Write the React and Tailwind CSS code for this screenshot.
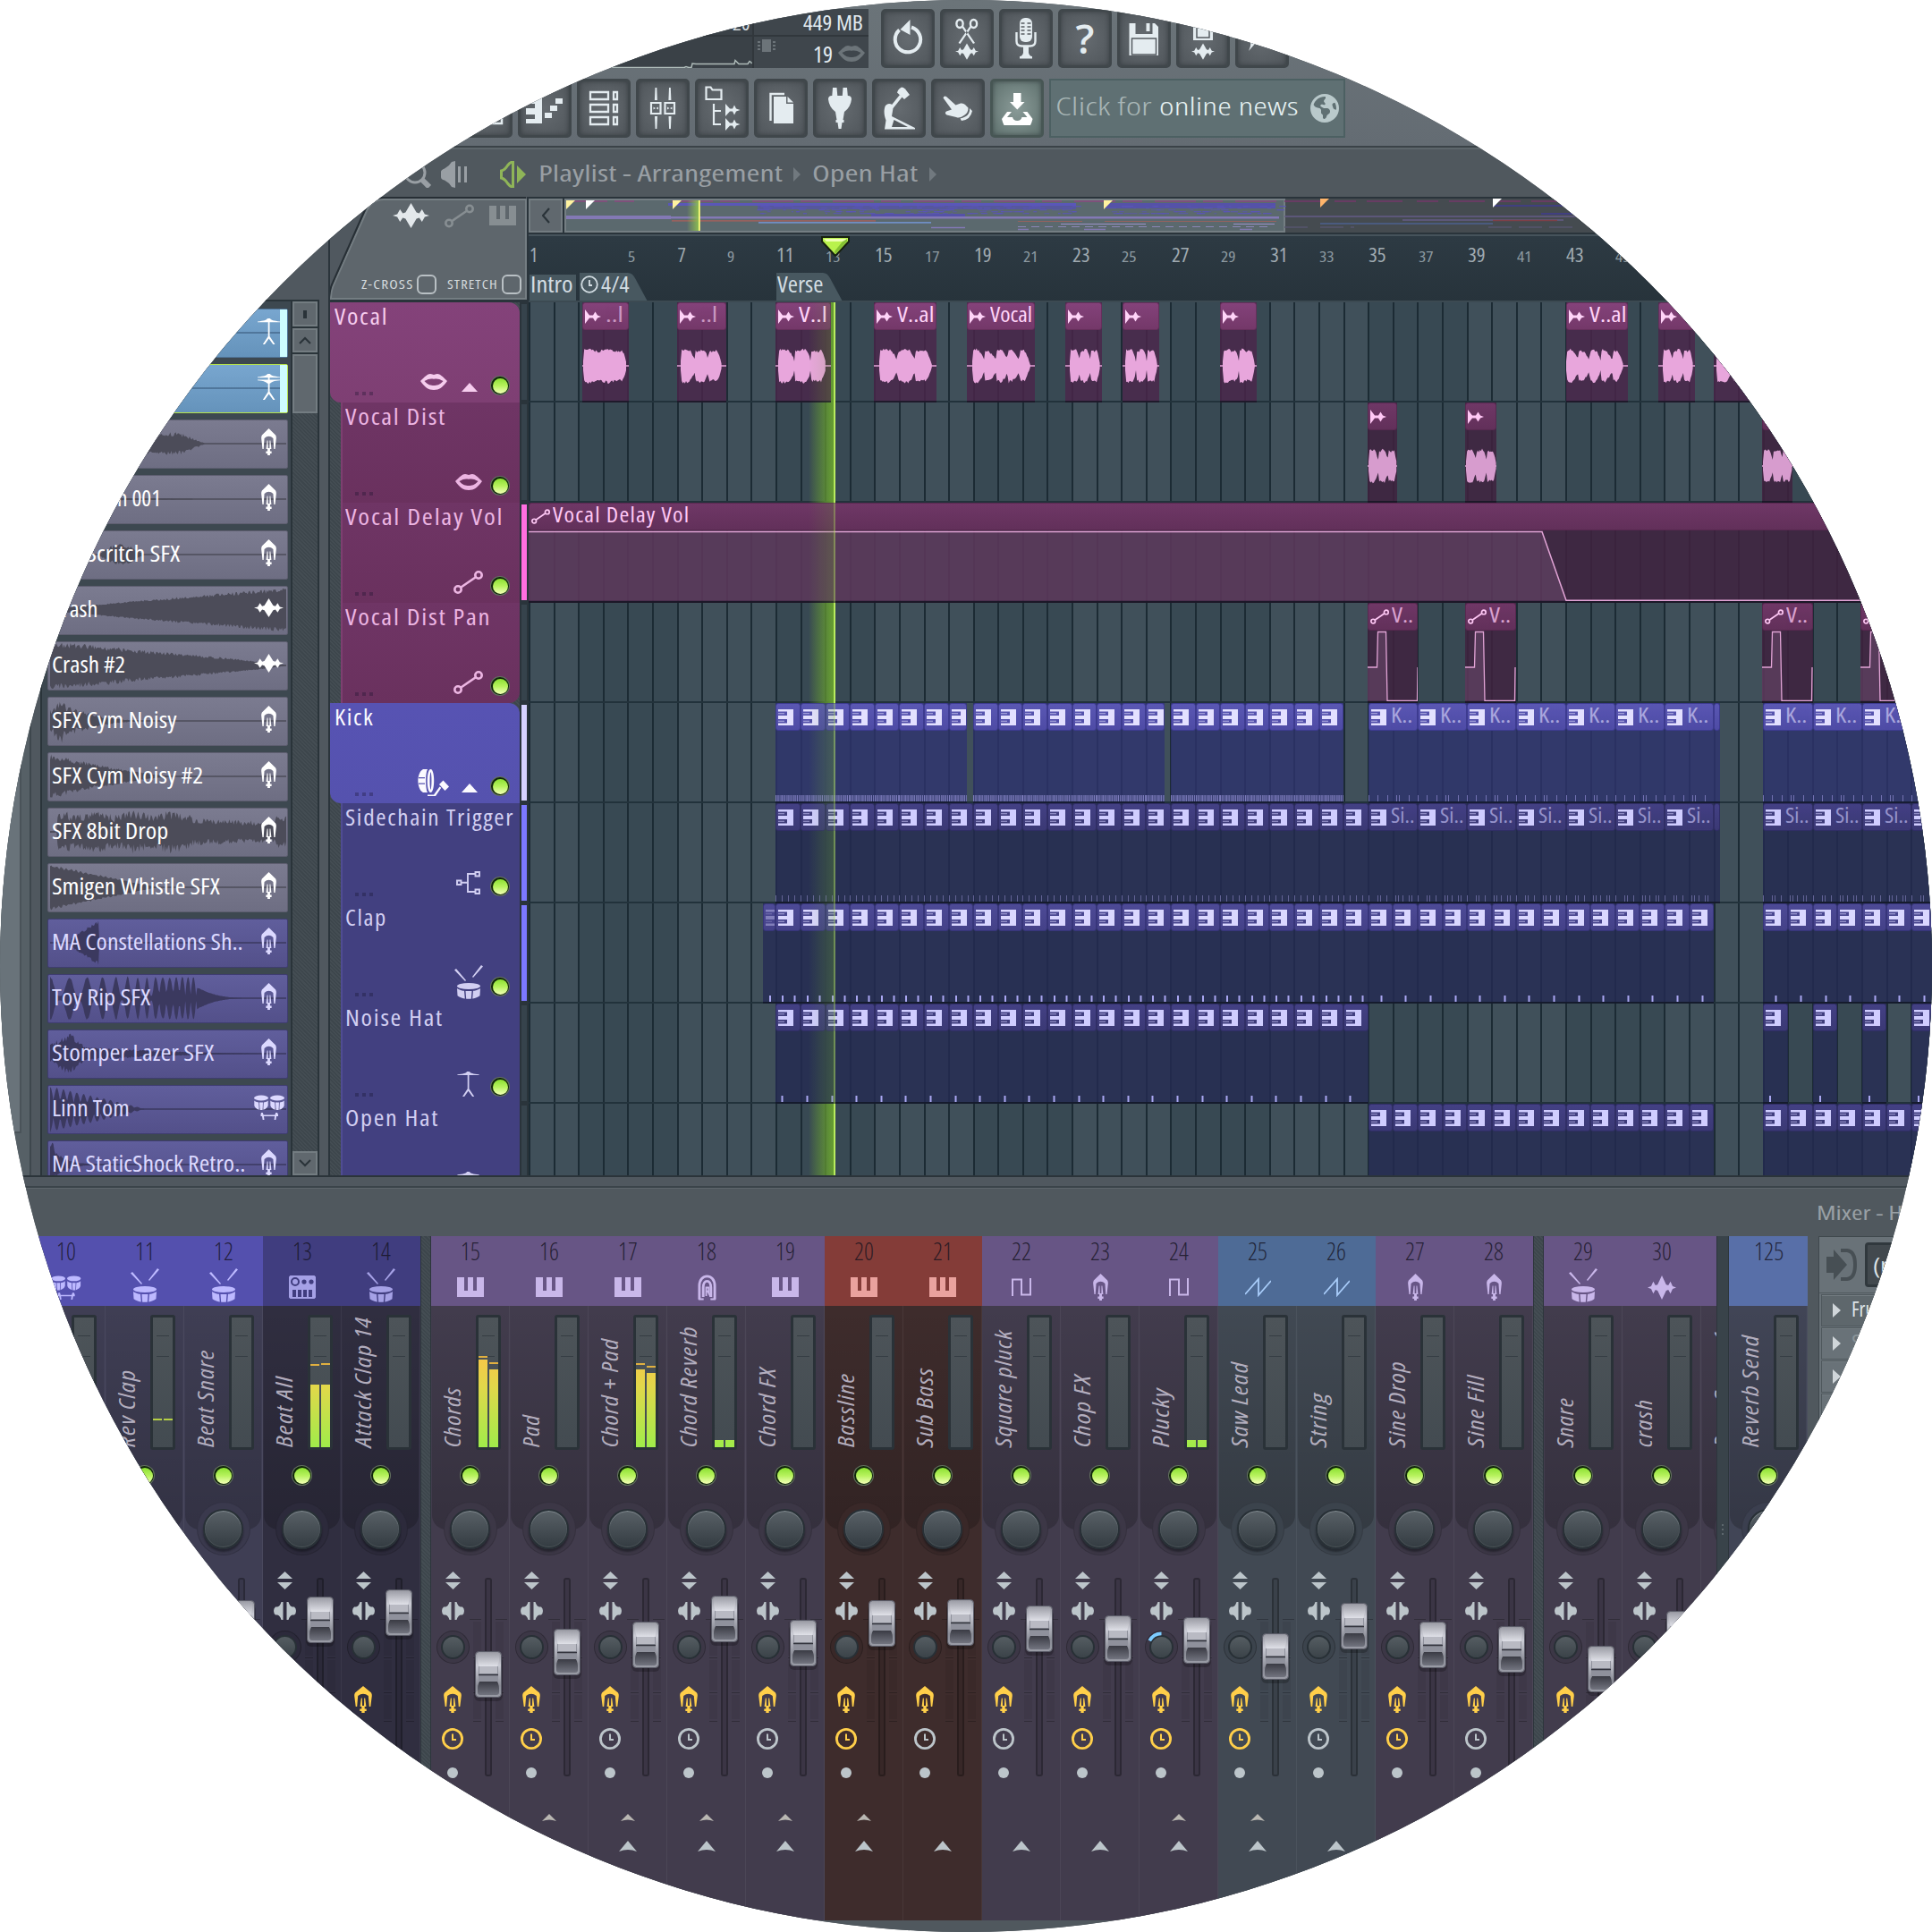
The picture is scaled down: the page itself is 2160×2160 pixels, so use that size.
import React, { useLayoutEffect, useRef, useState } from "react";
import { FaEarthAmericas } from "react-icons/fa6";

const FONT = "font-['Open_Sans','Noto_Sans',sans-serif]";

/* Text squeezed horizontally so that it occupies exactly `w` pixels. */
function T({ children, w, className = "" }) {
  const ref = useRef(null);
  const [k, setK] = useState(1);
  useLayoutEffect(() => {
    if (w && ref.current) setK(w / ref.current.offsetWidth);
  }, [w]);
  return (
    <span className={`inline-block shrink-0 whitespace-nowrap leading-none ${className}`} style={{ width: w }}>
      <span ref={ref} className="inline-block origin-left whitespace-nowrap [font-stretch:75%]" style={{ transform: `scaleX(${k})` }}>
        {children}
      </span>
    </span>
  );
}

/* ---------- waveform helpers ---------- */
function rng(seed) {
  let s = seed * 9301 + 49297;
  return () => {
    s = (s * 9301 + 49297) % 233280;
    return s / 233280;
  };
}
function wavePath(w, h, env, seed, rough = 0.25, step = 1.2) {
  const r = rng(seed);
  const mid = h / 2;
  const top = [];
  const bot = [];
  for (let x = 0; x <= w; x += step) {
    const e = env(x / w) * mid;
    top.push(`${x.toFixed(1)} ${(mid - e * (1 - rough * r())).toFixed(1)}`);
    bot.unshift(`${x.toFixed(1)} ${(mid + e * (1 - rough * r())).toFixed(1)}`);
  }
  return `M${top.join("L")}L${bot.join("L")}z`;
}
const burst = (k, tail = 0.1) => (t) => {
  const u = (t * k) % 1;
  const rise = Math.min(1, 0.3 + (u / k) * 34);
  const fall = Math.min(1, 0.3 + Math.sqrt((1 - u) / k) * 2.1);
  const end = t > 1 - tail ? Math.max(0, (1 - t) / tail) : 1;
  return Math.min(rise, fall) * Math.sqrt(end) * (0.94 + 0.06 * Math.sin(t * 14));
};

/* ---------- icons ---------- */
const WaveIcon = ({ className }) => (
  <svg viewBox="0 0 40 28" className={className} fill="currentColor" preserveAspectRatio="none">
    <path d="M0 14l5-1.5 3-5.5 3 4.5 3-1 6-10.5 6 10.5 3 1 3-4.5 3 5.5 5 1.5-5 1.5-3 5.5-3-4.5-3 1-6 10.5-6-10.5-3-1-3 4.5-3-5.5z" />
  </svg>
);
const HalfWave = ({ className }) => (
  <svg viewBox="0 0 18 16" className={className} fill="currentColor">
    <path d="M0 0l5 6.5 4 0 2.500-4 2.500 4 4 1.500-4 1.500-2.500 4-2.500-4-4 0L0 16z" />
  </svg>
);
const Lips = ({ className }) => (
  <svg viewBox="0 0 30 18" className={className} fill="currentColor" fillRule="evenodd">
    <path d="M0 8C5 3 8 0 11 0c2 0 3 1 4 1s2-1 4-1c3 0 6 3 11 8-5 7-9 10-15 10S5 15 0 8zM4.500 8c4 4.500 7 5 10.500 5s6.500-.5 10.500-5C21 5.500 18.500 5 15 5.800 11.500 5 9 5.500 4.500 8z" />
  </svg>
);
const Nodes = ({ className }) => (
  <svg viewBox="0 0 33 26" className={className} fill="none" stroke="currentColor" strokeWidth="2.600">
    <circle cx="5" cy="21" r="3.700" />
    <circle cx="28" cy="5" r="3.700" />
    <path d="M8.500 18.500L24.500 7.500" />
  </svg>
);
const Plug = ({ className }) => (
  <svg viewBox="0 0 20 30" className={className} fill="currentColor" preserveAspectRatio="none">
    <path d="M10 0l9 7.500q1 1.500.8 3.500L18.300 23h-1.500L15.800 11Q13 8.700 10 8.700T4.200 11l-1 12H1.700L.2 11Q0 9 1 7.500z" />
    <path d="M7.800 13.500L6.600 23h6.800l-1.200-9.500h-1L11 22H9l-.2-8.500z" />
    <path d="M8.300 22h3.400v8H8.300z" />
    <path d="M6.300 25.500h7.400V28H6.300z" />
  </svg>
);
const Piano = ({ className }) => (
  <svg viewBox="0 0 30 22" className={className} fill="currentColor">
    <path d="M0 0h8v15h4V0h6v15h4V0h8v22H0z" />
  </svg>
);
const Pattern = ({ className }) => (
  <svg viewBox="0 0 17 18" className={className} fill="currentColor">
    <path d="M0 0h17v18H0v-2.500h10V11H0V7h10V2.500H0z" />
    <path d="M0 4.200h7v1H0zM0 12.700h7v1H0z" opacity=".7" />
  </svg>
);
const Drum = ({ className }) => (
  <svg viewBox="0 0 32 38" className={className} fill="currentColor">
    <path d="M0 5.500L2 4l11 13-1 1zM30 0l2 1.500L21 14l-1-1z" />
    <ellipse cx="16" cy="23.500" rx="13" ry="3.500" />
    <path d="M3 26c3 2 7 2.800 8 2.800L11.800 37.500C7 36.800 4 35 3.500 34zM12.500 29h7l-.7 8.800h-5.600zM29 26c-3 2-7 2.800-8 2.800L20.200 37.500c4.800-.7 7.800-2.500 8.300-3.500z" />
  </svg>
);
const Hat = ({ className, twin }) => (
  <svg viewBox="0 0 25 30" className={className} fill="currentColor">
    <path d="M0 4.500C7 3.500 10 3 11 1h3c1 2 4 2.500 11 3.500v.8H0z" />
    {twin && <path d="M0 7.500h25v.8c-7 .5-9 1.500-11 3.500h-3C9 9.800 7 8.800 0 8.300z" />}
    <path d="M11.700 5h1.800v16l6 9h-2.200l-4.700-6.500L8 30H5.800l5.900-9z" />
  </svg>
);
const Toms = ({ className }) => (
  <svg viewBox="0 0 34 28" className={className} fill="currentColor">
    <ellipse cx="8" cy="3.500" rx="8" ry="3" />
    <ellipse cx="26" cy="3.500" rx="8" ry="3" />
    <path d="M.3 6.500C2 8 4 8.300 5.200 8.500l.5 8.300C2.500 16 .8 14 .3 12zM6 8.500h4l-.4 8.600H6.600zM15.700 6.500c-1.700 1.500-3.700 1.800-4.900 2l-.5 8.300c3.200-.8 4.900-2.800 5.400-4.800z" />
    <path d="M18.300 6.500c1.700 1.500 3.700 1.800 4.900 2l.5 8.300c-3.200-.8-4.900-2.800-5.400-4.800zM24 8.500h4l-.4 8.600h-3zM33.700 6.500c-1.700 1.500-3.700 1.800-4.900 2l-.5 8.300c3.200-.8 4.900-2.800 5.400-4.800z" />
    <path d="M8 20h1.800l.8 2.500h12.800l.8-2.500H26l1 2v2h-2l-.6 4h-1.800l.5-4H11l.5 4H9.700L9 24H7.500v-2z" />
  </svg>
);
const Kick = ({ className }) => (
  <svg viewBox="0 0 35 30" className={className} fill="currentColor">
    <path d="M6 0h5C8.500 4 8.500 22 11 26H6C-1.500 22-1.500 4 6 0z" />
    <path d="M1 9h7v1.200H1zM1 15.500h7v1.200H1z" fill="#5552b0" />
    <path fillRule="evenodd" d="M14.500 0c5 0 5 26 0 26s-5-26 0-26zm0 3c-1.300 3-1.300 17 0 20 1.300-3 1.300-17 0-20z" />
    <path d="M11 28.500h7l6.500-9 1.800 1.200L20 30h-9z" />
    <path d="M24 17l4.500-4.500 6.500 7-4.500 4.500z" />
  </svg>
);
const Route = ({ className }) => (
  <svg viewBox="0 0 27 26" className={className} fill="none" stroke="currentColor" strokeWidth="1.900">
    <path d="M1 10.500h4.500v4.500H1zM21.500 1H26v4.500h-4.500zM21.500 20.500H26V25h-4.500zM5.500 12.700H13M21.500 3H13v20h8.500" />
  </svg>
);
const Machine = ({ className }) => (
  <svg viewBox="0 0 30 26" className={className} fill="currentColor" fillRule="evenodd">
    <path d="M1.500 0h27L30 1.500v23L28.500 26h-27L0 24.500v-23zM7 2a5 5 0 100 10A5 5 0 007 2zm0 2a3 3 0 110 6 3 3 0 010-6zm10 .5a2.600 2.600 0 100 5.200 2.600 2.600 0 000-5.200zm8 0a2.600 2.600 0 100 5.200 2.600 2.600 0 000-5.200zM4 16v8h4v-8zm6 0v8h4v-8zm6 0v8h4v-8zm6 0v8h4v-8z" />
  </svg>
);
const Arch = ({ className }) => (
  <svg viewBox="0 0 22 30" className={className} fill="none" stroke="currentColor" strokeWidth="3">
    <path d="M2 29V13C2-2 20-2 20 13v16M6.500 26V15C6.500 5 15.500 5 15.500 15v11" />
    <path d="M10 25V15h3v4.500h-3M12 19.500l3 6M1 28.700h6M15 28.700h6" strokeWidth="2" />
  </svg>
);
const Square = ({ className }) => (
  <svg viewBox="0 0 22 20" className={className} fill="none" stroke="currentColor" strokeWidth="2">
    <path d="M1 20V1.500h10V18.500h10V0" />
  </svg>
);
const Saw = ({ className }) => (
  <svg viewBox="0 0 29 22" className={className} fill="none" stroke="currentColor" strokeWidth="1.800">
    <path d="M0 19L15 2V20L29 4" />
  </svg>
);
const Clock = ({ className }) => (
  <svg viewBox="0 0 24 24" className={className} fill="none" stroke="currentColor">
    <circle cx="12" cy="12" r="10.600" strokeWidth="2.800" />
    <path d="M12 6.500V13h4" strokeWidth="2" />
  </svg>
);

const Led = ({ className = "" }) => (
  <span className={`flex shrink-0 rounded-full border-[1.500px] border-white/35 bg-[#10260a] p-[1.500px] ${className}`}>
    <span className="flex-1 rounded-full bg-linear-to-b from-[#8be02e] via-[#b8f35e] to-[#f2ffb4]" />
  </span>
);

/* ---------- top toolbar ---------- */
const wavelet = (cx, cy, s = 1) => (
  <path
    transform={`translate(${cx - 13 * s} ${cy - 9 * s}) scale(${0.65 * s})`}
    d="M0 14l5-1.500 3-5.500 3 4.500 3-1 6-10.500 6 10.500 3 1 3-4.500 3 5.500 5 1.500-5 1.500-3 5.500-3-4.500-3 1-6 10.500-6-10.500-3-1-3 4.500-3-5.500z"
  />
);
const halfwave = (x, y) => <path d={`M${x} ${y - 7}l5 5.500h3l2-4 2 4 4.500 1.500-4.500 1.500-2 4-2-4h-3l-5 5.500z`} />;
const tool = {
  undo: (
    <>
      <path d="M20.500 23.500A14.200 14.200 0 1034 20.500" fill="none" stroke="currentColor" strokeWidth="4" />
      <path d="M32.500 12v17L21.500 23z" />
    </>
  ),
  cut: (
    <>
      <g fill="none" stroke="currentColor" strokeWidth="2.400">
        <ellipse cx="22" cy="16.500" rx="3.600" ry="4.500" />
        <ellipse cx="37.500" cy="16.500" rx="3.600" ry="4.500" />
      </g>
      <path d="M24 20l2-1 13 19-2 1zM35.500 20l-2-1L20.500 38l2 1z" />
      {wavelet(30, 47.500)}
    </>
  ),
  mic: (
    <>
      <rect x="23" y="10" width="14" height="27" rx="6" />
      <path d="M24.500 16h4m3 0h4M24.500 20h4m3 0h4M24.500 24h4m3 0h4M24.500 28h4m3 0h4" stroke="#555b60" strokeWidth="1.500" />
      <path d="M19.500 26v10q0 5.500 6 5.500h9q6 0 6-5.500V26" fill="none" stroke="currentColor" strokeWidth="2.400" />
      <path d="M27 42h6v7q1 4 4 4v2.500H23V53q3 0 4-4z" />
    </>
  ),
  save: (
    <>
      <path d="M13.500 16h7v12h19V16H42l4 4v32H13.500z" />
      <path d="M32.500 16h4v9h-4z" />
      <path d="M16.500 33h27v18h-27z" fill="none" stroke="#555b60" strokeWidth="1.500" />
    </>
  ),
  saveWave: (
    <>
      <path d="M19 8h22v27H19z" />
      <path d="M23 20h14v12H23z" fill="none" stroke="#555b60" strokeWidth="1.500" />
      {wavelet(30, 47.500)}
    </>
  ),
  chat: <path d="M30 12c12 0 20 6 20 14s-8 14-20 14c-3 0-6 0-8-1l-7 8c3-7 3-10 0-13-3-3-5-5-5-8 0-8 8-14 20-14zM16 30q6 8 22 5V20H20z" fillRule="evenodd" />,
  list: <path d="M12 14h36v8H12zM12 28h36v8H12zM12 42h36v8H12z" fill="none" stroke="currentColor" strokeWidth="2.500" />,
  piano: (
    <>
      <path d="M9 16h18v34H9v-5h10v-5H9v-7h10v-5H9z" />
      <path d="M30 38h8v6h-8zM36 30h8v6h-8zM42 22h8v6h-8z" />
    </>
  ),
  rack: (
    <path
      d="M15 15h20v8H15zM41 15h4v8h-4zM15 29h20v8H15zM41 29h4v8h-4zM15 43h20v8H15zM41 43h4v8h-4z"
      fill="none"
      stroke="currentColor"
      strokeWidth="2.300"
    />
  ),
  mixer: (
    <>
      <path d="M17 27h10.500v12H17zM32.500 27H43v12H32.500z" fill="none" stroke="currentColor" strokeWidth="2.200" />
      <path d="M21.500 10h1.800l.6 14h-3zM37 10h1.800l.6 14h-3zM21 42h3l-.6 14h-1.800zM36.500 42h3l-.6 14h-1.800zM19.500 31.500l2.500 1.500-2.500 1.500zM25 31.500L22.500 33l2.500 1.500zM35 31.500l2.500 1.500-2.500 1.500zM40.500 31.500L38 33l2.500 1.500z" />
    </>
  ),
  tree: (
    <>
      <path d="M12.500 9.500h5l2 3h10v10.500h-17zM21 28v23h8M21 36h8" fill="none" stroke="currentColor" strokeWidth="2.200" />
      {halfwave(34, 35)}
      {halfwave(34, 51)}
    </>
  ),
  pages: (
    <>
      <path d="M18.500 47V17H34" fill="none" stroke="currentColor" strokeWidth="2.400" />
      <path d="M22 20h14v8h8v22H22z" />
      <path d="M37.500 20l6.500 6.500h-6.500z" />
    </>
  ),
  plug: <path d="M22 10h4.500l.8 9h-6zM33.500 10H38l.8 9h-6zM17 23q0-4 4-4h18q4 0 4 4-1 9-8 14l-1.500 9h1v3h-2l-1 7h-3l-1-7h-2v-3h1L25 37q-7-5-8-14z" />,
  hammer: (
    <>
      <path d="M33 9.500q2 0 4 2l5 6.500-6 5-8-7.500q1-4 5-6z" />
      <path d="M31 18l3 2-10.500 13-3-2z" />
      <path d="M19 28c3 0 5 2 4.500 5L22 42l26 13v1.500H14l1.500-10C13 40 13 34 15 30q2-2 4-2z" />
      <path d="M22 54l2.500-8L40 54z" fill="#555b60" />
    </>
  ),
  hand: (
    <>
      <path d="M13.500 21.500Q14.500 18.500 17 20L27.500 29.500 33 27.500Q36 27 38 29L41.500 32.500Q42 38 36 41.500 32 44.500 28 43L17.500 40.500Q14.500 38.500 17 36.500L23 34.500z" />
      <path d="M43 33Q44 42 32.500 44.500L34 47Q44 46 46 36z" />
    </>
  ),
  down: (
    <>
      <path d="M26 16h8.500v10h4l-8.200 8.500-8.300-8.500h4z" />
      <path d="M19 37h5l-5 6h6q1 4 5.300 4 4.200 0 5.200-4h6l-5-6h5l6 8q-1 4-2.500 7H15.500Q14 49 13 45z" />
    </>
  ),
};
const ToolButton = ({ icon, hot }) => (
  <div
    className={`flex h-[66px] w-[60px] shrink-0 items-center justify-center rounded-[5px] border-[3px] ${
      hot
        ? "border-[#475654] bg-radial from-[#8a9b98] to-[#5f716e] text-white"
        : "border-[#40474b] bg-radial from-[#656b70] to-[#50565b] text-[#e4ecf0]"
    } shadow-[inset_0_0_5px_rgba(30,36,40,.5)]`}
  >
    {icon === "help" ? (
      <span className="-mt-[2px] text-[46px] leading-none font-semibold">?</span>
    ) : (
      <svg viewBox="0 0 60 66" className="h-[66px] w-[60px] shrink-0" fill="currentColor">
        {tool[icon]}
      </svg>
    )}
  </div>
);

function Toolbar() {
  return (
    <header className="flex h-[163px] shrink-0 flex-col bg-linear-to-b from-[#6b7479] to-[#646c73] pt-[10px]">
      <div className="flex h-[66px] pl-[600px]">
        <div className="flex w-[241px] flex-col bg-[#3a4147]">
          <div className="flex h-[31px] items-center justify-end border-b-2 border-[#31373c] pr-[2px] text-[22px] text-[#d5dce0]">
            <T w={20}>20</T>
          </div>
          <svg viewBox="0 0 241 35" className="h-[35px] w-[241px]" fill="none" stroke="#aebbb9" strokeWidth="1.500">
            <path d="M60 34.500H165l2-1 3 1h3l1-4.500 4 .5h43l1-4 4 4h10l2-3 1.500 1 1 1.500" />
          </svg>
        </div>
        <div className="flex w-[130px] flex-col border-l-2 border-[#31373c] bg-[#3f464c] text-[#e2ebf0]">
          <div className="flex h-[31px] items-center justify-end border-b-2 border-[#31373c] pt-[2px] pr-[6px] text-[23px]">
            <T w={67}>449 MB</T>
          </div>
          <div className="flex h-[35px] justify-between pl-[4px]">
            <svg viewBox="0 0 20 14" className="mt-[3px] h-[14px] w-[20px]" fill="#6c7479">
              <path d="M5 0h10v14H5zM0 2h3v2H0zM0 6h3v2H0zM0 10h3v2H0zM17 2h3v2h-3zM17 6h3v2h-3zM17 10h3v2h-3z" />
            </svg>
            <div className="flex items-center gap-[6px] pr-[4px] pt-[3px] text-[26px]">
              <T w={22}>19</T>
              <Lips className="h-[18px] w-[30px] text-[#6c7479]" />
            </div>
          </div>
        </div>
        <div className="flex gap-[6px] pl-[14px]">
          {["undo", "cut", "mic", "help", "save", "saveWave", "chat"].map((i) => (
            <ToolButton key={i} icon={i} />
          ))}
        </div>
      </div>
      <div className="mt-[12px] flex h-[66px] gap-[6px] pl-[513px]">
        {["list", "piano", "rack", "mixer", "tree", "pages", "plug", "hammer", "hand"].map((i) => (
          <ToolButton key={i} icon={i} />
        ))}
        <ToolButton icon="down" hot />
        <div className="flex w-[331px] items-center gap-[9px] border-2 border-[#4c6062] bg-[#5f7073] pl-[5px] text-[28px] font-light">
          <T w={107} className="-mt-[6px] text-[#a9b7b7]">
            Click for
          </T>
          <T w={156} className="-mt-[6px] font-[350] text-[#e6f1f2]">
            online news
          </T>
          <FaEarthAmericas className="ml-[4px] size-[32px] text-[#b9c9cb]" />
        </div>
      </div>
    </header>
  );
}

/* ---------- playlist title ---------- */
const Chev = () => <span className="h-0 w-0 border-y-[8px] border-l-[8px] border-y-transparent border-l-[#71797f]" />;
function PlaylistTitle() {
  return (
    <div className="flex h-[57px] shrink-0 items-center border-t-2 border-[#3b4348] bg-[#50585e] pt-[4px] pl-[445px] text-[25px] text-[#999fa4] shadow-[inset_0_2px_0_#5d666b]">
      <svg viewBox="0 0 37 30" className="h-[30px] w-[37px]" fill="none" stroke="currentColor">
        <circle cx="19" cy="13" r="11" strokeWidth="3" />
        <path d="M27 21l8 8" strokeWidth="6" />
      </svg>
      <svg viewBox="0 0 30 30" className="ml-[11px] h-[30px] w-[30px]" fill="currentColor">
        <path d="M0 12q0-2 4-3.500Q9 6 12 1l4-1v30l-4-1q-3-5-8-7.500-4-1-4-3.500zM19 6h3v18h-3zM26 6h3v18h-3z" />
      </svg>
      <svg viewBox="0 0 30 30" className="ml-[36px] h-[30px] w-[30px] text-[#8fb558]" fill="currentColor">
        <path d="M1.500 11q4-1 7-6 3-4 6-4v28q-3 0-6-4-3-5-7-6z" fill="none" stroke="currentColor" strokeWidth="3" />
        <path d="M19 5l10 10-10 10z" />
      </svg>
      <T w={273} className="-mt-[3px] ml-[13px]">Playlist - Arrangement</T>
      <span className="w-[12px]" />
      <Chev />
      <T w={118} className="mx-[13px] -mt-[3px]">Open Hat</T>
      <Chev />
    </div>
  );
}

/* ---------- picker ---------- */
const decay = (p) => (t) => Math.pow(Math.max(0, 1 - t), p);
const pickerItems = [
  { kind: "blue", icon: "hat" },
  { kind: "blue", icon: "hat2", sel: true },
  { name: "", w: 10, env: (t) => (t < 0.65 ? 0.5 * Math.min(1, (0.66 - t) * 9) : 0) },
  { name: "Explosion 001", w: 122, env: (t) => (t < 0.6 ? 0.1 * (0.6 - t) + 0.02 : 0) },
  { name: "MA Scritch SFX", w: 143, env: (t) => (t < 0.2 ? 0 : t < 0.4 ? Math.sin((t - 0.2) * 15.7) * 0.45 : 0) },
  { name: "Crash", w: 52, icon: "wave", env: (t) => 0.05 + 1.0 * Math.pow(t, 1.0) * (1 - 0.1 * t), rough: 0.2 },
  { name: "Crash #2", w: 82, icon: "wave", env: (t) => Math.pow(1 - t, 0.8) * (t < 0.3 ? 1.05 : 1.0), rough: 0.25 },
  { name: "SFX Cym Noisy", w: 140, env: (t) => (t < 0.05 ? 0.5 + t * 10 : Math.max(0, 1.1 * Math.pow(Math.max(0, 1 - t * 2.2), 2.4))), rough: 0.5 },
  { name: "SFX Cym Noisy #2", w: 169, env: (t) => Math.pow(Math.max(0, 1 - t * 1.9), 1.3) * 0.98, rough: 0.3 },
  { name: "SFX 8bit Drop", w: 130, env: (t) => (t < 0.03 ? 0.03 : t < 0.6 ? 0.85 + 0.1 * Math.sin(t * 40) : t > 0.95 ? 0.7 : 0.5 + (0.85 - t) * 0.4), rough: 0.45 },
  { name: "Smigen Whistle SFX", w: 188, env: (t) => Math.max(0, 1 - t * 2.2) * (0.95 + 0.05 * Math.sin(t * 300)), rough: 0.08 },
  { kind: "pur", name: "MA Constellations Sh..", w: 214, env: (t) => (t > 0.09 && t < 0.207 ? 0.2 + (t - 0.09) * 7 : 0), rough: 0.2 },
  {
    kind: "pur",
    name: "Toy Rip SFX",
    w: 110,
    env: (t) => (t < 0.62 ? 0.95 * (0.1 + 0.9 * Math.pow(Math.abs(Math.cos(3.1416 * (t * 12 + t * t * t * 30))), t < 0.45 ? 3 : 0.9)) : 0.5 * Math.pow(Math.max(0, 1 - (t - 0.62) * 4), 3)),
    rough: 0.08,
  },
  { kind: "pur", name: "Stomper Lazer SFX", w: 181, env: (t) => (t < 0.08 ? 0.4 + t * 7 : t < 0.14 ? 0.96 - (t - 0.08) * 9 : Math.max(0, 0.4 * Math.pow(Math.max(0, 1 - t), 1.8))), rough: 0.4 },
  { kind: "pur", name: "Linn Tom", w: 87, icon: "toms", env: (t) => Math.pow(Math.max(0, 1 - t * 2.5), 0.9) * (0.35 + 0.65 * Math.abs(Math.cos(t * 110))), rough: 0.05 },
  { kind: "pur", name: "MA StaticShock Retro..", w: 217, env: (t) => (t < 0.015 ? 1 : decay(18)(t) * 0.9), rough: 0.3 },
];
const itemSkin = {
  gray: "border-[#5e5e70] bg-linear-to-b from-[#7b7b90] to-[#6e6e83] text-white",
  pur: "border-[#3f3d70] bg-linear-to-b from-[#605e9c] to-[#53508a] text-[#dcd9ff]",
  blue: "border-[#4f7396] bg-linear-to-b from-[#78a6cf] to-[#6593bb] text-white",
};
function PickerItem({ it, i }) {
  const kind = it.kind || "gray";
  const waveCol = kind === "pur" ? "#3b395f" : "#4c4c59";
  return (
    <div className={`relative flex h-[55px] w-[269px] shrink-0 items-center justify-between rounded-[2px] border ${it.sel ? "border-[#b5e24a] bg-linear-to-b from-[#78a6cf] to-[#6593bb] text-white" : itemSkin[kind]}`}>
      <svg viewBox="0 0 264 52" className="absolute top-0 left-[2px] h-[52px] w-[264px]">
        <path d="M0 26H264" stroke={kind === "blue" ? "#466a8c" : waveCol} strokeWidth="1.300" />
        {it.env && <path d={wavePath(264, 52, it.env, i + 3, it.rough ?? 0.4)} fill={waveCol} />}
      </svg>
      <T w={it.w || 10} className="relative -mt-[5px] ml-[4px] text-[25px] font-medium">
        {it.name || " "}
      </T>
      <span className="relative flex w-[45px] shrink-0 items-center justify-center">
        {it.icon === "wave" && <WaveIcon className="mb-[6px] ml-[4px] h-[21px] w-[33px]" />}
        {it.icon === "toms" && <Toms className="mb-[5px] ml-[4px] h-[28px] w-[34px]" />}
        {it.icon === "hat" && <Hat className="mb-[6px] ml-[4px] h-[30px] w-[25px]" />}
        {it.icon === "hat2" && <Hat twin className="mb-[6px] ml-[4px] h-[30px] w-[25px]" />}
        {!it.icon && <Plug className="mb-[6px] ml-[4px] h-[30px] w-[17px]" />}
      </span>
      {kind === "blue" && <span className="absolute top-0 right-0 h-full w-[8px] bg-[#cdfdff]" />}
    </div>
  );
}
const Hatch = "bg-[repeating-linear-gradient(45deg,#3d464c_0_1.500px,#444d53_1.500px_3px)]";
function ScrollBtn({ className, children }) {
  return <div className={`flex shrink-0 items-center justify-center border-2 border-[#737c81] bg-[#60686e] text-[#2a3339] ${className}`}>{children}</div>;
}
function Picker() {
  return (
    <div className="flex w-[367px] shrink-0">
      <div className="flex w-[24px] flex-col bg-[#566066]">
        <div className="h-[1047px] border-r-2 border-b-2 border-[#4a5359] bg-[#69737a]" />
      </div>
      <div className="w-[9px] bg-[#566066]" />
      <div className="w-[12px] border-l-2 border-[#3e474d] bg-[#50585f]" />
      <div className="flex w-[322px] flex-col bg-[#50585f] pt-[115px]">
        <div className="flex h-[979px] w-[312px] overflow-hidden border-2 border-b-0 border-[#2a343a] bg-[#3d4850]">
          <div className="flex w-[278px] flex-col gap-[7px] pt-[8px] pl-[6px]">
            {pickerItems.map((it, i) => (
              <PickerItem key={i} it={it} i={i} />
            ))}
          </div>
          <div className={`flex w-[30px] flex-col justify-between border-l-2 border-[#2a343a] ${Hatch}`}>
            <div className="flex flex-col gap-[2px] bg-[#2a343a]">
              <ScrollBtn className="h-[28px]">
                <span className="h-[9px] w-[4px] bg-[#2a3339]" />
              </ScrollBtn>
              <ScrollBtn className="h-[27px]">
                <svg viewBox="0 0 14 9" className="h-[9px] w-[14px]" fill="none" stroke="currentColor" strokeWidth="2">
                  <path d="M1 8l6-6 6 6" />
                </svg>
              </ScrollBtn>
              <ScrollBtn className="h-[66px]" />
            </div>
            <ScrollBtn className="h-[27px]">
              <svg viewBox="0 0 14 9" className="h-[9px] w-[14px]" fill="none" stroke="currentColor" strokeWidth="2">
                <path d="M1 1l6 6 6-6" />
              </svg>
            </ScrollBtn>
          </div>
        </div>
      </div>
    </div>
  );
}

/* ---------- track headers ---------- */
const Dots = () => (
  <span className="flex gap-[4px] opacity-30">
    <i className="size-[4px] bg-[#14102a]" />
    <i className="size-[4px] bg-[#14102a]" />
    <i className="size-[4px] bg-[#14102a]" />
  </span>
);
const tracks = [
  { name: "Vocal", w: 60, icon: <Lips className="h-[18px] w-[30px] shrink-0" />, head: "pink", peak: "bg-[#36434c]" },
  { name: "Vocal Dist", w: 113, icon: <Lips className="h-[18px] w-[30px] shrink-0" />, peak: "bg-[#36434c]", skin: "pink" },
  { name: "Vocal Delay Vol", w: 177, icon: <Nodes className="h-[26px] w-[33px] shrink-0" />, peak: "bg-[#ff6fe0]", skin: "pink" },
  { name: "Vocal Dist Pan", w: 163, icon: <Nodes className="h-[26px] w-[33px] shrink-0" />, peak: "bg-[#36434c]", skin: "pink", last: true },
  { name: "Kick", w: 45, icon: <Kick className="h-[30px] w-[35px] shrink-0" />, head: "blue", peak: "bg-[#d6d2ff]" },
  { name: "Sidechain Trigger", w: 189, icon: <Route className="h-[26px] w-[27px] shrink-0" />, peak: "bg-[#7b78ff]", skin: "blue" },
  { name: "Clap", w: 47, icon: <Drum className="mb-[3px] h-[38px] w-[32px] shrink-0" />, peak: "bg-[#7b78ff]", skin: "blue" },
  { name: "Noise Hat", w: 110, icon: <Hat className="h-[29px] w-[25px] shrink-0" />, peak: "bg-[#36434c]", skin: "blue" },
  { name: "Open Hat", w: 105, icon: <Hat className="h-[29px] w-[25px] shrink-0" />, peak: "bg-[#36434c]", skin: "blue" },
];
function TrackHeader({ t }) {
  const skin =
    t.head === "pink"
      ? "bg-linear-to-b from-[#84427a] to-[#7e3f73] text-[#f6cdee] rounded-tr-[12px] rounded-bl-[12px]"
      : t.head === "blue"
        ? "bg-linear-to-b from-[#5753b3] to-[#5552ae] text-[#fbfaff] rounded-tr-[12px] rounded-bl-[12px]"
        : t.skin === "pink"
          ? "border-l-2 border-[#7d3f70] bg-linear-to-b from-[#6f3565] to-[#6a315e] text-[#ecb5e2]"
          : "border-l-2 border-[#4f4c93] bg-[#424080] text-[#d2cff2]";
  return (
    <div className={`flex h-[112px] shrink-0 ${t.head ? "" : "pl-[12px]"}`}>
      <div className={`flex flex-1 flex-col justify-between pt-[3px] ${t.head ? "pl-[5px]" : "pl-[3px]"} ${skin} ${t.last ? "rounded-br-[12px]" : ""}`}>
        <T w={t.w} className="text-[25px] tracking-[1.500px]">
          {t.name}
        </T>
        <div className={`flex h-[22px] items-end mb-[8px] ${t.head ? "pl-[23px]" : "pl-[11px]"}`}>
          <Dots />
          <div className={`flex h-[22px] flex-1 items-center justify-end pr-[11px] ${t.head ? "gap-[14px]" : "gap-[7px]"}`}>
            <span className="-mt-[8px] flex h-[22px] w-[35px] items-center justify-center">{t.icon}</span>
            {t.head && (
              <svg viewBox="0 0 18 10" className="mt-[3px] h-[10px] w-[18px]" fill="currentColor">
                <path d="M9 0l9 10H0z" />
              </svg>
            )}
            <Led className="size-[22px]" />
          </div>
        </div>
      </div>
      <div className="flex w-[10px] justify-center bg-[#2a343b] pt-[2px] pb-[3px]">
        <span className={`w-[6px] ${t.peak}`} />
      </div>
    </div>
  );
}

/* ---------- playlist canvas ---------- */
const BAR = 27.6;
const X0 = 591;
const barX = (n) => (n - 1) * BAR;

function Marker({ left, w, children, slant }) {
  return (
    <div className="absolute bottom-[1px] flex h-[32px] items-center text-[25px] text-[#d3dde3]" style={{ left, width: w }}>
      <svg viewBox={`0 0 ${w} 32`} className="absolute inset-0" style={{ width: w, height: 32 }}>
        <path d={slant ? `M0 0H${w - 24}q5 0 8 6l14 26H0z` : `M0 2H${w}V32H0z`} fill="#485860" />
      </svg>
      <span className="relative -mt-[7px] flex items-center gap-[3px] pl-[1px]">{children}</span>
    </div>
  );
}

function Minimap() {
  const r = rng(11);
  const bits = [];
  for (let i = 0; i < 230; i++) {
    const x = 215 + r() * 585;
    if (x > 572 && x < 605) continue;
    bits.push(<rect key={i} x={x} y={8 + Math.floor(r() * 5) * 2} width={2 + r() * 9} height="1.300" fill="#5a55b5" opacity={0.5 + r() * 0.5} />);
  }
  const flags = [
    [2, 2, "#fff3a0"],
    [24, 2, "#ffffff"],
    [121, 2, "#fff3a0"],
    [603, 2, "#fff3a0"],
    [845, 0, "#ffb56b"],
    [1038, 0, "#ffffff"],
  ];
  return (
    <svg viewBox="0 0 1300 38" className="h-[38px] w-[1300px] shrink-0">
      <defs>
        <linearGradient id="mmg" x1="0" x2="1" y1="0" y2="0">
          <stop offset="0" stopColor="#8fc050" stopOpacity="0" />
          <stop offset="1" stopColor="#8fc050" />
        </linearGradient>
      </defs>
      <rect width="1300" height="38" fill="#454b50" />
      <rect x="1" y="1" width="804" height="36" fill="#5b696e" stroke="#747e83" strokeWidth="2" />
      <path d="M2 3h90M120 3h680" stroke="#8a4a80" strokeWidth="1.500" strokeDasharray="46 8 22 14" />
      <path d="M805 3h495" stroke="#74386a" strokeWidth="1.300" strokeDasharray="40 16 24 12" />
      <rect x="116" y="5" width="456" height="3" fill="#5a57b8" />
      <rect x="216" y="8" width="356" height="4" fill="#5552a8" opacity=".8" />
      <rect x="605" y="5" width="190" height="6" fill="#5552a8" />
      {bits}
      <rect x="343" y="17" width="105" height="3" fill="#5552a8" />
      <rect x="2" y="19" width="117" height="4" fill="#8379b5" />
      <rect x="119" y="20" width="680" height="2.500" fill="#8379b5" />
      <path d="M120 24.800h228" stroke="#94625f" strokeWidth="1.800" />
      <path d="M217 26.800h193" stroke="#6f8fc4" strokeWidth="1.800" />
      <path d="M507 25.500h72m25 0h192" stroke="#94625f" strokeWidth="1.200" />
      <path d="M555 28.500h95m98 0h46" stroke="#9a92c8" strokeWidth="1.200" />
      <path d="M507 31.500h280" stroke="#8b86b5" strokeWidth="1" strokeDasharray="9 6" />
      <path d="M410 32.500h38m59 2h12m62 0h24m150 0h14" stroke="#8379b5" strokeWidth="1.300" />
      <path d="M805 20h495M937 24h180" stroke="#645c86" strokeWidth="1.500" />
      <path d="M845 28h193" stroke="#4d618f" strokeWidth="1.500" />
      <path d="M1038 24.500h72" stroke="#7d4048" strokeWidth="1.500" />
      <path d="M1038 8h80m-26 9h70" stroke="#413f80" strokeWidth="2" />
      <path d="M805 32h28m12 0h38m150 0h100" stroke="#56566e" strokeWidth="1.300" strokeDasharray="26 8" />
      {flags.map(([x, y, c]) => (
        <path key={x} d={`M${x} ${y}h10l-10 10z`} fill={c} />
      ))}
      <rect x="137" y="2" width="14" height="34" fill="url(#mmg)" />
      <rect x="150" y="2" width="1.800" height="34" fill="#fdfd7a" />
    </svg>
  );
}

function Ruler() {
  const nums = [];
  for (let n = 1; n <= 47; n += 2) {
    if (n === 3) continue;
    nums.push([n, n === 1 || n % 4 === 3]);
  }
  return (
    <div className="relative h-[76px] border-t-2 border-[#46535b] bg-linear-to-b from-[#2d3a43] to-[#27333b]">
      {nums.map(([n, big]) => (
        <span
          key={n}
          className={`absolute leading-none ${big ? "top-[9px] text-[22px] font-medium text-[#a0abb1]" : "top-[14px] text-[17px] text-[#8d9aa1]"}`}
          style={{ left: barX(n) + 1 }}
        >
          <T w={big ? (n > 9 ? 20 : 9) : n > 9 ? 16 : 8}>{n}</T>
        </span>
      ))}
      <Marker left={1} w={52}>
        <T w={48}>Intro</T>
      </Marker>
      <Marker left={57} w={78} slant>
        <svg viewBox="0 0 20 20" className="h-[20px] w-[20px]" fill="none" stroke="currentColor" strokeWidth="1.800">
          <circle cx="10" cy="10" r="8.800" />
          <path d="M10 5v6h3" />
        </svg>
        <T w={31}>4/4</T>
      </Marker>
      <Marker left={277} w={76} slant>
        <T w={51}>Verse</T>
      </Marker>
      <div className="absolute right-0 bottom-0 left-0 h-[2px] bg-[#3c4a52]" />
      <svg viewBox="0 0 34 24" className="absolute top-0 left-[326px] h-[24px] w-[34px]">
        <path d="M2 1h30v5L17 22 2 6z" fill="#b9f24c" stroke="#17210f" strokeWidth="2" />
        <path d="M4 3h26l-3 3H7z" fill="#efffb5" />
        <path d="M30 3v3L17 20l-1-3 9-11z" fill="#6fae2a" opacity=".7" />
      </svg>
    </div>
  );
}

function Clip({ row, x, w, head, body, children, label, lw, icon, labelCls = "", h = 112 }) {
  return (
    <div className={`absolute flex flex-col overflow-hidden border-b-2 border-[#0f1420]/70 ${body}`} style={{ left: x - X0, top: row * 112, width: w, height: h }}>
      <div className={`flex h-[31px] shrink-0 items-center gap-[5px] overflow-hidden rounded-[3px] border pl-[2px] ${head}`}>
        {icon}
        {label && (
          <T w={lw} className={`-mt-[4px] text-[23px] ${labelCls}`}>
            {label}
          </T>
        )}
      </div>
      {children}
    </div>
  );
}

const vocalClips = [
  [651, 52, "..l", 20, 1, 1],
  [757, 55, "..l", 19, 3, 4],
  [867, 62, "V..l", 32, 3, 3],
  [977, 70, "V..al", 41, 3, 6],
  [1081, 76, "Vocal", 47, 5, 6],
  [1191, 41, "", 0, 3, 5],
  [1254.5, 41, "", 0, 3, 3],
  [1364, 41, "", 0, 2, 3],
  [1750.5, 69, "V..al", 41, 5, 0],
  [1854, 41, "", 0, 3, 5],
  [1916, 60, "", 0, 3, 3],
];
function VocalWave({ w, segs, off, dim, end = 6 }) {
  return (
    <svg viewBox={`0 0 ${w} 80`} className="h-[80px] shrink-0" style={{ width: w }}>
      <path d={`M0 40H${w}`} stroke="#e6a5da" strokeWidth="1.300" />
      <path transform={`translate(${off} 20)`} d={wavePath(w - off - end, 40, burst(segs), Math.round(w) + segs, 0.16)} fill={dim ? "#d79cce" : "#e8a6dc"} />
    </svg>
  );
}
const pink = "border-[#662f5c] bg-linear-to-b from-[#84427a] to-[#743869] text-[#ffd4f8]";
const pinkDark = "border-[#582850] bg-linear-to-b from-[#6f3766] to-[#62305a] text-[#ffc8f5]";
const blueHead = "border-[#3d3b90] bg-linear-to-b from-[#5a57b3] to-[#4e4ba5] text-[#e3e0ff]";
const blueDark = "border-[#302e66] bg-linear-to-b from-[#434084] to-[#3b3975] text-[#d0cdff]";
const blueMid = "border-[#37357a] bg-linear-to-b from-[#4d4a96] to-[#444188] text-[#dad7ff]";
const patIcon = <Pattern className="h-[18px] w-[17px] shrink-0" />;
const nodeIcon = <Nodes className="h-[19px] w-[21px] shrink-0" />;

function Ticks({ xs, w, color, n }) {
  return (
    <svg viewBox={`0 0 ${w} 7`} className="mt-auto h-[7px] shrink-0" style={{ width: w }} fill={color}>
      {xs.map((x, i) => (
        <rect key={i} x={x} y="0" width={n} height="7" />
      ))}
    </svg>
  );
}

function patternClips() {
  const out = [];
  const add = (row, x, w, type, label, ticks) => {
    const skins = {
      kick: [blueHead, "bg-[rgba(46,51,112,.78)]"],
      dark: [blueDark, "bg-[rgba(36,42,82,.8)]"],
      mid: [blueMid, "bg-[rgba(36,42,84,.8)]"],
    };
    const [head, body] = skins[type];
    out.push(
      <Clip
        key={`${row}-${x.toFixed(1)}`}
        row={row}
        x={x}
        w={w}
        h={row === 8 ? 82 : 112}
        head={head}
        body={body}
        icon={w > 12 ? <span className={w < 16 ? "opacity-40" : ""}>{patIcon}</span> : null}
        label={label}
        lw={label === "K.." ? 24 : 26}
        labelCls="opacity-60"
      >
        {ticks && <Ticks {...ticks} w={w} />}
      </Clip>
    );
  };
  const bx = (n) => X0 + barX(n) + 0.4;
  const dense = { xs: Array.from({ length: 16 }, (_, i) => i * 1.72 + (i % 4 === 3 ? 0.4 : 0)), n: 0.9, color: "#8583c4" };
  const side = { xs: [0, 7, 14, 21], n: 0.9, color: "#6a6a9e" };
  const sparse = { xs: [0, 10, 21, 31, 34, 45], n: 0.9, color: "#7b79ba" };
  const sparse2 = { xs: [0, 10, 13, 20, 30, 33, 38, 45, 48], n: 0.9, color: "#6a6a9e" };
  const tick = (xs) => ({ xs, n: 2, color: "#aaa7f2" });
  for (let n = 11; n < 34; n++) {
    const cut = n === 18 || n === 26;
    add(4, bx(n), cut ? 20.500 : BAR, "kick", null, dense);
  }
  for (let n = 11; n < 35; n++) {
    add(5, bx(n), BAR, "dark", null, side);
    add(7, bx(n), BAR, "dark", null, tick([6.500]));
  }
  for (const n of [35, 37, 39, 41, 43, 45, 47, 51, 53, 55, 57]) {
    add(4, bx(n), BAR * 2, "kick", "K..", sparse);
    add(5, bx(n), BAR * 2, "dark", "Si..", sparse2);
  }
  add(4, bx(49), 7, "kick", null, null);
  add(5, bx(49), 7, "dark", null, null);
  add(6, 853, 14.400, "mid", null, tick([7]));
  for (let n = 11; n < 58; n++) {
    if (n >= 49 && n < 51) continue;
    add(6, bx(n), BAR, "mid", null, tick(n < 35 ? [7, 20.500] : [13.500]));
    if (n >= 35) add(8, bx(n), BAR, "dark", null, null);
    if (n >= 51 && n % 2 === 1) add(7, bx(n), BAR, "dark", null, tick([7]));
  }
  return out;
}

function Canvas() {
  return (
    <div className="relative h-[976px] w-[1569px] overflow-hidden bg-[#1b2a33]">
      <div className="flex h-full">
        {Array.from({ length: 57 }, (_, i) => {
          const bar = i + 1;
          const dark = Math.floor((bar + 5) / 4) % 2 === 0;
          return <div key={i} className={`h-full w-[27.600px] shrink-0 border-l-2 border-[#1c2b34] ${dark ? "bg-[#384953]" : "bg-[#40505a]"}`} />;
        })}
      </div>
      <div className="absolute inset-0 flex flex-col">
        {Array.from({ length: 9 }, (_, i) => (
          <div key={i} className="h-[112px] shrink-0 border-b-2 border-[#22323b]" />
        ))}
      </div>
      <div className="absolute top-0 left-[313px] h-full w-[29px] bg-linear-to-r from-[#68a030]/0 to-[#68a030]" />
      <div className="absolute top-0 left-[341px] h-full w-[2px] bg-[#c2f565]" />

      {vocalClips.map(([x, w, label, lw, segs, off]) => (
        <Clip key={x} row={0} x={x} w={w} head={pink} body="bg-[rgba(74,38,74,.82)]" label={label} lw={lw} labelCls={label === "..l" ? "opacity-60" : ""} icon={<HalfWave className="h-[16px] w-[18px] shrink-0" />}>
          <VocalWave w={w} segs={segs} off={off} end={w > 53 ? 5 : 2} />
        </Clip>
      ))}
      {[
        [1528.5, 33],
        [1638, 35],
        [1970, 34],
      ].map(([x, w]) => (
        <Clip key={x} row={1} x={x} w={w} head={pinkDark} body="bg-[rgba(63,34,64,.85)]" icon={<HalfWave className="h-[16px] w-[18px] shrink-0" />}>
          <VocalWave w={w} segs={3} off={1} dim end={0} />
        </Clip>
      ))}

      <Clip row={2} x={591} w={1569} head={pinkDark} body="bg-[rgba(63,34,64,.85)]" icon={nodeIcon} label="Vocal Delay Vol" lw={153} labelCls="-ml-[2px] tracking-[1px]">
        <svg viewBox="0 0 1569 79" className="h-[79px] w-[1569px] shrink-0">
          <path d="M0 1.500H1133L1160 78.500H0z" fill="#a070a0" fillOpacity=".26" />
          <path d="M0 1.500H1133L1160 78.300H1569" fill="none" stroke="#e2a4d6" strokeWidth="1.500" />
        </svg>
      </Clip>
      {[1528.5, 1638.3, 1970, 2080].map((x) => (
        <Clip key={x} row={3} x={x} w={56.5} head={pinkDark} body="bg-[rgba(63,34,64,.85)]" icon={nodeIcon} label="V.." lw={24} labelCls="-ml-[2px] opacity-75">
          <svg viewBox="0 0 56.500 80" className="h-[80px] w-[56.500px] shrink-0">
            <path d="M0 41H10.500L11.500 1.500H20.500L22 78.500H0z" fill="#a070a0" fillOpacity=".26" />
            <path d="M0 41H10.500L11.500 1.500H20.500L22 78.300H55.500L56 41" fill="none" stroke="#e2a4d6" strokeWidth="1.300" />
          </svg>
        </Clip>
      ))}
      {patternClips()}
      <div className="absolute top-0 left-[341px] h-full w-[2px] bg-[#c2f565]/35" />
      <div className="absolute top-0 left-[313px] h-full w-[29px] bg-linear-to-r from-[#68a030]/0 to-[#68a030]/20" />
    </div>
  );
}

const CheckBox = () => <span className="size-[22px] rounded-[6px] border-[2.500px] border-[#b9c0c4]" />;
function Playlist() {
  return (
    <div className="flex flex-1 flex-col bg-[#2a343b] pl-[2px]">
      <div className="flex h-[118px] shrink-0">
        <div className="relative flex w-[220px] flex-col justify-between pt-[7px] pb-[9px]">
          <svg viewBox="0 0 220 118" className="absolute inset-0 h-[118px] w-[220px]">
            <path d="M-2 0H220V3H62Q46 4 40 20L4 100Q0 106 0 118H-2z" fill="#50585f" />
            <path d="M1 114Q1 104 5 96L40 18Q46 3 60 3H219V114z" fill="#5e666c" stroke="#747d82" strokeWidth="2" />
            <path d="M-1 112Q0 102 3 96L38 17Q45 1 59 1H219" fill="none" stroke="#272f35" strokeWidth="2" />
          </svg>
          <div className="relative flex items-center justify-end gap-[17px] pr-[12px]">
            <WaveIcon className="h-[28px] w-[41px] text-[#e3e8eb]" />
            <Nodes className="h-[27px] w-[33px] text-[#878e92]" />
            <Piano className="h-[22px] w-[30px] text-[#878e92]" />
          </div>
          <div className="relative flex items-center justify-end gap-[4px] pr-[6px] text-[15px] font-medium tracking-[1px] text-[#d4dadd]">
            <T w={58} className="-mt-[2px]">Z-CROSS</T>
            <CheckBox />
            <T w={57} className="-mt-[2px] ml-[8px]">
              STRETCH
            </T>
            <CheckBox />
          </div>
        </div>
        <div className="ml-[2px] flex flex-1 flex-col">
          <div className="flex h-[42px] gap-[2px] pt-[2px]">
            <ScrollBtn className="h-[38px] w-[38px]">
              <svg viewBox="0 0 9 18" className="h-[18px] w-[9px]" fill="none" stroke="currentColor" strokeWidth="2.200">
                <path d="M8 1L1 9l7 8" />
              </svg>
            </ScrollBtn>
            <Minimap />
          </div>
          <Ruler />
        </div>
      </div>
      <div className="flex h-[976px] overflow-hidden">
        <div className={`flex w-[222px] shrink-0 flex-col ${Hatch}`}>
          {tracks.map((t) => (
            <TrackHeader key={t.name} t={t} />
          ))}
        </div>
        <Canvas />
      </div>
    </div>
  );
}

/* ---------- mixer ---------- */
const skins = {
  indigo: { head: "bg-[#5450ae] text-[#bdb9ff]", body: "bg-[#3f3e54]" },
  navy: { head: "bg-[#403d7f] text-[#a5a1e6]", body: "bg-[#302e40]" },
  purple: { head: "bg-[#675585] text-[#c9b7ea]", body: "bg-[#423c4d]" },
  red: { head: "bg-[#843c38] text-[#eaa29e]", body: "bg-[#3e2c2c]" },
  steel: { head: "bg-[#4e6b96] text-[#a9cdfa]", body: "bg-[#414953]" },
  send: { head: "bg-[#586fa8] text-white", body: "bg-[#414556]" },
};
const mIcons = {
  toms: <Toms className="h-[27px] w-[34px]" />,
  drum: <Drum className="mb-[4px] h-[38px] w-[32px]" />,
  machine: <Machine className="h-[26px] w-[30px]" />,
  piano: <Piano className="h-[22px] w-[30px]" />,
  arch: <Arch className="h-[29px] w-[21px]" />,
  square: <Square className="h-[20px] w-[22px]" />,
  plug: <Plug className="h-[30px] w-[17px]" />,
  saw: <Saw className="h-[22px] w-[29px]" />,
  wave: <WaveIcon className="h-[27px] w-[32px]" />,
  none: null,
};
/* fader and meter values are pixel offsets inside their slots */
const strips = [
  [10, "indigo", "toms", "Toms", 55, 26],
  [11, "indigo", "drum", "Rev Clap", 87, 26, { peaks: [113, 113] }],
  [12, "indigo", "drum", "Beat Snare", 110, 26],
  [13, "navy", "machine", "Beat All", 80, 22, { bars: [78, 78], peaks: [52, 51] }],
  [14, "navy", "drum", "Attack Clap 14", 146, 14, { end: true }],
  [15, "purple", "piano", "Chords", 68, 83, { clock: 1, bars: [50, 61], peaks: [43, 50] }],
  [16, "purple", "piano", "Pad", 37, 58, { clock: 1, small: 1 }],
  [17, "purple", "piano", "Chord + Pad", 122, 50, { small: 1, big: 1, bars: [61, 65], peaks: [51, 54] }],
  [18, "purple", "arch", "Chord Reverb", 136, 21, { small: 1, big: 1, bars: [140, 140] }],
  [19, "purple", "piano", "Chord FX", 90, 48, { small: 1, big: 1 }],
  [20, "red", "piano", "Bassline", 84, 26, { clock: 1, small: 1, big: 1 }],
  [21, "red", "piano", "Sub Bass", 90, 25, { big: 1 }],
  [22, "purple", "square", "Square pluck", 132, 32, { big: 1 }],
  [23, "purple", "plug", "Chop FX", 82, 43, { clock: 1, big: 1 }],
  [24, "purple", "square", "Plucky", 67, 45, { clock: 1, small: 1, big: 1, arc: 1, bars: [140, 140] }],
  [25, "steel", "saw", "Saw Lead", 96, 63, { clock: 1, small: 1, big: 1 }],
  [26, "steel", "saw", "String", 61, 29, { big: 1 }],
  [27, "purple", "plug", "Sine Drop", 96, 50, { clock: 1 }],
  [28, "purple", "plug", "Sine Fill", 81, 55, { end: true }],
  [29, "purple", "drum", "Snare", 56, 77],
  [30, "purple", "wave", "crash", 54, 38],
];

function Meter({ bars, peaks }) {
  return (
    <div className="relative flex h-[151px] w-[28px] shrink-0 gap-[2px] rounded-[3px] border-[3px] border-[#2a3238] bg-linear-to-b from-[#4d5459] to-[#434b51]">
      <span className="absolute top-[20px] left-[4px] h-px w-[14px] bg-[#353d43]" />
      <span className="absolute top-[43px] left-[4px] h-px w-[14px] bg-[#353d43]" />
      {[0, 1].map((i) => (
        <div key={i} className="relative flex flex-1 items-end overflow-hidden">
          {bars && (
            <svg viewBox="0 0 10 151" preserveAspectRatio="none" className="h-[151px] w-full shrink-0">
              <defs>
                <linearGradient id="lvl" gradientUnits="userSpaceOnUse" x1="0" x2="0" y1="40" y2="151">
                  <stop offset="0" stopColor="#ffc347" />
                  <stop offset=".4" stopColor="#e0d84a" />
                  <stop offset="1" stopColor="#a0ec4a" />
                </linearGradient>
              </defs>
              <rect x="0" y={bars[i] + 3} width="10" height={151 - bars[i] - 3} fill="url(#lvl)" />
            </svg>
          )}
          {peaks && (
            <span className={`absolute left-0 h-[2px] w-full ${peaks[i] > 100 ? "bg-[#b5d045]" : "bg-[#e0b040]"}`} style={{ top: peaks[i] }} />
          )}
        </div>
      ))}
    </div>
  );
}

function FaderCap({ y }) {
  return (
    <svg viewBox="0 0 34 58" className="absolute -left-[1px] h-[58px] w-[34px]" style={{ top: y - 2 }}>
      <defs>
        <linearGradient id="fc1" x1="0" x2="0" y1="0" y2="1">
          <stop offset="0" stopColor="#8f9099" />
          <stop offset=".3" stopColor="#cbccd5" />
          <stop offset=".75" stopColor="#8b8d97" />
          <stop offset="1" stopColor="#9a9ca6" />
        </linearGradient>
        <linearGradient id="fc2" x1="0" x2="0" y1="0" y2="1">
          <stop offset="0" stopColor="#9c9da6" />
          <stop offset="1" stopColor="#e2e3ea" />
        </linearGradient>
        <linearGradient id="fc3" x1="0" x2="0" y1="0" y2="1">
          <stop offset="0" stopColor="#3a3b44" />
          <stop offset="1" stopColor="#72747f" />
        </linearGradient>
      </defs>
      <rect x="1" y="6" width="32" height="51" rx="6" fill="#000" opacity=".22" />
      <rect x="2.500" y="1.500" width="29" height="51" rx="4" fill="url(#fc1)" stroke="#5b5c68" />
      <path d="M6 18h22v17H6z" fill="#8f919c" />
      <path d="M7 19h20v7H7z" fill="#b9bac3" />
      <path d="M4.500 5q0-2.500 3-2.500h19q3 0 3 2.500Q29.500 12 27 18.500H7Q4.500 12 4.500 5z" fill="url(#fc2)" />
      <path d="M7 35h20q2.500 4 2 12 0 3-3 3H8q-3 0-3-3-.5-8 2-12z" fill="url(#fc3)" />
      <path d="M6 27.500h22" stroke="#33343d" strokeWidth="1.500" />
    </svg>
  );
}

const TickPair = ({ wide }) => (
  <div className="flex justify-center gap-[16px]">
    <span className={`h-px bg-black/25 ${wide ? "w-[13px]" : "w-[9px]"}`} />
    <span className={`h-px bg-black/25 ${wide ? "w-[13px]" : "w-[9px]"}`} />
  </div>
);

function Strip({ s, clip }) {
  const [num, skin, icon, name, lw, fader, o = {}] = s;
  const c = skins[skin];
  return (
    <div className={`flex h-full flex-col overflow-hidden ${clip || "w-[88px]"} shrink-0`}>
      <div className={`flex h-[78px] w-[88px] shrink-0 flex-col items-center justify-between pt-[2px] ${c.head}`}>
        <T w={num > 99 ? 33 : 22} className="text-[28px] font-light text-[#14121e]/80">
          {num || " "}
        </T>
        <span className="flex h-[42px] items-center">{mIcons[icon]}</span>
      </div>
      <div className={`relative flex w-[88px] flex-1 flex-col items-center border-r border-white/5 ${c.body}`}>
        <div className="absolute inset-x-px top-0 h-[250px] rounded-b-[16px] bg-linear-to-b from-black/0 to-black/20" />
        <div className="relative mt-[10px] flex h-[151px] w-full">
          <div className="relative w-[50px]">
            <div className="absolute bottom-[3px] left-[10px] flex h-[26px] w-[150px] origin-top-left translate-y-[26px] -rotate-90 items-center text-[25px] text-[#c4bfcf]/90 italic">
              <T w={lw} className="tracking-[1px]">
                {name}
              </T>
            </div>
          </div>
          <Meter {...o} />
        </div>
        <Led className="relative mt-[17px] size-[23px]" />
        <div className={`relative mt-[18px] flex size-[60px] shrink-0 items-center justify-center rounded-full border border-black/20 ${c.body}`}>
          <div className="absolute inset-0 rounded-full bg-black/8" />
          <div className="relative size-[45px] rounded-full border-2 border-[#283036] bg-linear-to-b from-[#596167] to-[#343c42] shadow-[0_3px_2px_rgba(10,14,18,.45),inset_0_1px_1px_rgba(160,170,175,.6),inset_0_-1px_1px_rgba(120,130,130,.35)]" />
        </div>
        <div className="relative flex w-full">
          <div className="flex w-[48px] flex-col items-center pt-[18px] text-[#bcc5ca]">
            <svg viewBox="0 0 17 20" className="h-[20px] w-[17px]" fill="currentColor">
              <path d="M8.500 0L17 8H0zM0 12h17l-8.500 8z" />
            </svg>
            <svg viewBox="0 0 25 20" className="mt-[14px] h-[20px] w-[25px]" fill="currentColor">
              <path d="M10.500 0v20H8.500Q7 15 4 14.500H2Q0 13 0 10t2-4.500H4Q7 5 8.500 0zM14.500 0v20h2q1.500-5 4.500-5.500h2q2-1.500 2-4.500t-2-4.500h-2Q18 5 16.500 0z" />
            </svg>
            <div className="relative mt-[12px] flex size-[37px] items-center justify-center rounded-full border border-black/25 bg-black/8">
              <div className="size-[27px] rounded-full border-2 border-[#283036] bg-linear-to-b from-[#555d62] to-[#3b4349]" />
              {o.arc && (
                <svg viewBox="0 0 37 37" className="absolute inset-0 h-full w-full" fill="none" stroke="#7cccff" strokeWidth="4">
                  <path d="M4.500 11Q9 2.500 18.500 2.500" />
                </svg>
              )}
            </div>
            <Plug className="mt-[25px] h-[30px] w-[20px] text-[#ffcf4a]" />
            <Clock className={`mt-[17px] size-[24px] ${o.clock ? "text-[#ffcf4a]" : ""}`} />
            <span className="mt-[20px] size-[12px] rounded-full bg-current" />
          </div>
          <div className="relative w-[32px]">
            <div className="absolute top-[71px] left-[-5px] flex w-[42px] flex-col">
              <TickPair wide />
              <div className="mx-[4px] flex h-[42px] justify-between py-[2px]">
                <span className="w-[9px] bg-black/6" />
                <span className="w-[9px] bg-black/6" />
              </div>
              <TickPair />
              <div className="mx-[4px] flex h-[38px] justify-between py-[2px]">
                <span className="w-[9px] bg-black/6" />
                <span className="w-[9px] bg-black/6" />
              </div>
              <TickPair />
              <div className="mx-[4px] flex h-[31px] justify-between py-[2px]">
                <span className="w-[9px] bg-black/6" />
                <span className="w-[9px] bg-black/6" />
              </div>
              <TickPair />
            </div>
            <div className="absolute top-[25px] left-[12px] h-[222px] w-[8px] rounded-[3px] border-2 border-black/25 bg-black/10" />
            <div className="absolute top-[25px] left-0">
              <FaderCap y={fader} />
            </div>
          </div>
        </div>
        <div className="mt-[40px] flex h-[42px] flex-col items-center justify-between text-[#bcc5ca]">
          <svg viewBox="0 0 16 8" className={`h-[8px] w-[16px] ${o.small ? "text-[#b9b7b2]" : "opacity-0"}`} fill="currentColor">
            <path d="M8 0l8 8Q8 5 0 8z" />
          </svg>
          <svg viewBox="0 0 20 12" className={`h-[12px] w-[20px] ${o.big ? "" : "opacity-0"}`} fill="currentColor">
            <path d="M10 0l10 12Q10 8 0 12z" />
          </svg>
        </div>
      </div>
    </div>
  );
}

const Divider = ({ className = "w-[12px]" }) => <div className={`h-full shrink-0 border-x border-[#2d363c] ${Hatch} ${className}`} />;

function Mixer() {
  return (
    <section className="flex flex-1 flex-col bg-[#50585e]">
      <div className="h-[12px] shrink-0 border-t-2 border-[#2b343a] bg-[#50585f]" />
      <div className="flex h-[56px] shrink-0 items-start justify-end border-t-2 border-[#3b444a] pt-[16px] pr-[13px] text-[22px] text-[#99a0a5] shadow-[inset_0_1px_0_#5d666b]">
        <T w={116}>Mixer - Hat</T>
      </div>
      <div className="flex h-[765px] shrink-0 pl-[30px]">
        {strips.map((s) => (
          <React.Fragment key={s[0]}>
            <Strip s={s} />
            {s[6]?.end && <Divider />}
          </React.Fragment>
        ))}
        <Strip s={["", "purple", "none", "Perc Snare 1", 131, 40]} clip="w-[17px]" />
        <div className="flex h-full w-[14px] shrink-0 flex-col items-center gap-[3px] border-x border-[#2d363c] bg-[#39434a] pt-[322px]">
          <i className="size-[2px] bg-[#5d676d]" />
          <i className="size-[2px] bg-[#5d676d]" />
          <i className="size-[2px] bg-[#5d676d]" />
        </div>
        <Strip s={[125, "send", "none", "Reverb Send", 126, 40]} />
        <div className="ml-[12px] flex flex-1 flex-col overflow-hidden border border-[#3f484d] bg-[#697278]">
          <div className="flex h-[63px] shrink-0 items-center border-b border-[#50595e] pl-[8px]">
            <svg viewBox="0 0 34 36" className="h-[36px] w-[34px] shrink-0" fill="#474f54">
              <path d="M0 9h8V1l15 17L8 35v-8H0z" />
              <path d="M16 2h7Q32 3 32 18T23 34H16" fill="none" stroke="#474f54" strokeWidth="4" />
            </svg>
            <div className="ml-[9px] flex h-[50px] w-[90px] shrink-0 items-center rounded-[4px] border-[3px] border-[#30383d] bg-[#42494e] pl-[6px] text-[25px] text-[#dde4e8]">
              <T w={66}>(none)</T>
            </div>
          </div>
          {["Fruity reverb", "Slot 2", "Slot 3", "Slot 4"].map((n, i) => (
            <div key={n} className={`mx-[2px] mt-[1px] flex h-[36px] shrink-0 items-center border border-[#4f585d] pl-[12px] text-[23px] shadow-[inset_0_1px_0_#737c81] ${i ? "text-[#8a9499]" : "bg-[#5e676c] text-[#dde4e8]"}`}>
              <span className="h-0 w-0 border-y-[8px] border-l-[9px] border-y-transparent border-l-[#d0d6da]" />
              <T w={i ? 50 : 100} className="-mt-[4px] ml-[12px]">
                {n}
              </T>
            </div>
          ))}
        </div>
      </div>
    </section>
  );
}

export default function App() {
  return (
    <main className={`h-[2160px] w-[2160px] overflow-hidden bg-white ${FONT}`}>
      <div className="flex h-full w-full flex-col overflow-hidden rounded-full bg-[#50585e]">
        <Toolbar />
        <PlaylistTitle />
        <div className="flex h-[1094px] shrink-0">
          <Picker />
          <Playlist />
        </div>
        <Mixer />
      </div>
    </main>
  );
}
